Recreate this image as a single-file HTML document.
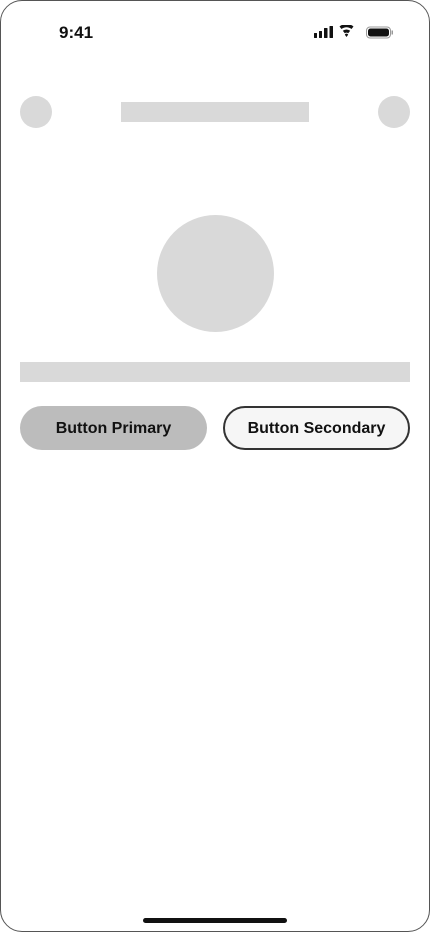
<!DOCTYPE html><html><head><style>
body{margin:0;width:430px;height:932px;background:#fff;position:relative;overflow:hidden;font-family:"Liberation Sans",sans-serif}
.frame{position:absolute;left:0;top:0;width:428px;height:930px;border:1px solid #555;border-radius:22px}
.a{position:absolute}
.g{background:#d9d9d9}
.btn{position:absolute;top:406px;height:44px;border-radius:22px;display:flex;align-items:center;justify-content:center;font-weight:bold;font-size:16px;color:#111;box-sizing:border-box;padding-top:2px}
</style></head><body>
<div class="frame"></div>
<div class="a" style="left:59px;top:23px;font-size:17px;font-weight:bold;color:#111">9:41</div>
<svg class="a" style="left:313px;top:25px" width="80" height="15">
<rect x="1" y="8" width="3" height="5" rx="0.5" fill="#111"/><rect x="6" y="6" width="3" height="7" rx="0.5" fill="#111"/><rect x="11" y="3" width="3.5" height="10" rx="0.5" fill="#111"/><rect x="16.5" y="1" width="3.5" height="12" rx="0.5" fill="#111"/>
<path d="M26.5 1.5a11 11 0 0 1 14 0l-2 2.5a8 8 0 0 0-10 0z M29.8 5.8a6 6 0 0 1 7.4 0l-2 2.4a3 3 0 0 0-3.4 0z M31.8 9.6a2 2 0 0 1 3.4 0l-1.7 2.4z" fill="#111"/>
<rect x="53.5" y="2" width="24" height="11" rx="3.5" fill="none" stroke="#999" stroke-width="1"/><rect x="55" y="3.5" width="21" height="8" rx="2.5" fill="#111"/><rect x="78.5" y="5.5" width="1.5" height="4" fill="#999"/>
</svg>
<div class="a g" style="left:20px;top:96px;width:32px;height:32px;border-radius:50%"></div>
<div class="a g" style="left:378px;top:96px;width:32px;height:32px;border-radius:50%"></div>
<div class="a g" style="left:121px;top:102px;width:188px;height:20px"></div>
<div class="a g" style="left:157px;top:215px;width:117px;height:117px;border-radius:50%"></div>
<div class="a g" style="left:20px;top:362px;width:390px;height:20px"></div>
<div class="btn" style="left:20px;width:187px;background:#bcbcbc">Button Primary</div>
<div class="btn" style="left:223px;width:187px;background:#f6f6f6;border:2px solid #333">Button Secondary</div>
<div class="a" style="left:143px;top:918px;width:144px;height:5px;border-radius:3px;background:#111"></div>
</body></html>
